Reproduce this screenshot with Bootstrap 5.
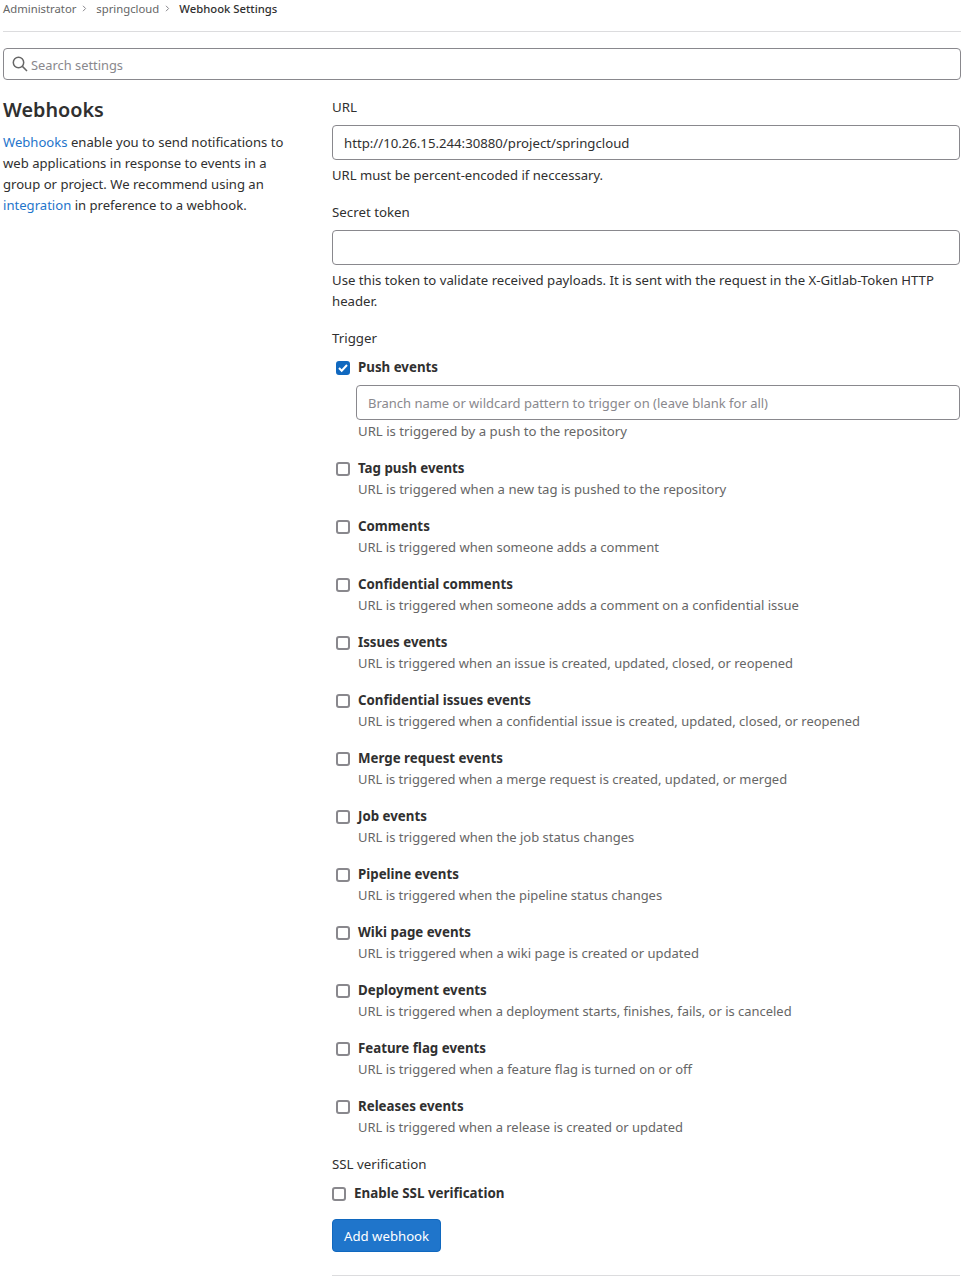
<!DOCTYPE html>
<html lang="en"><head><meta charset="utf-8"><title>Webhook Settings</title>
<link href="https://cdn.jsdelivr.net/npm/bootstrap@5.3.0/dist/css/bootstrap.min.css" rel="stylesheet">
<style>
html,body{background:#fff}
body{font-family:"Noto Sans","Open Sans",sans-serif;font-size:13.1px;line-height:21px;color:#303030;overflow:hidden}
.shell{width:958px;margin-left:3px}
.crumbs{height:35px;border-bottom:1px solid #dcdcde;margin-top:-3px;font-size:11.3px;line-height:24px;color:#666}
.crumbs b{font-weight:500;color:#303030}
.crumbs svg{margin:0 6px 2px 6px}
.searchbox{height:32px;margin-top:16px;border:1px solid #89888d;border-radius:4px;padding:0 8px;color:#89888d;gap:3px;font-size:12.85px}
.searchbox span{padding-top:2px}
.sidecol{width:329px;flex:none;padding-top:18px}
.sidecol h4{font-size:19.8px;line-height:24px;font-weight:600;margin:0 0 10px;color:#303030}
.sidecol p{width:290px;margin:0}
.sidecol a{color:#1f75cb;text-decoration:none}
.maincol{width:628px;flex:none;padding-top:17px}
.fieldname{font-weight:400;font-size:13.3px;margin:0;line-height:21px;display:block}
.fieldgap{margin-top:7px}
.textbox{display:block;width:100%;height:35px;border:1px solid #89888d;border-radius:4px;padding:0 11px;font:inherit;color:#303030;background:#fff;outline:0}
.urlbox{font-size:13.2px}
.textbox::placeholder{color:#89888d;opacity:1}
.hint{margin-top:5px}
.hintlong{font-size:13.18px}
.evt{margin-top:16px;padding-left:26px;position:relative}
.evt.first{margin-top:8px}
.evt .boxmark,.sslrow .boxmark{position:absolute;left:4px;top:4px}
.boxmark{display:block;width:14px;height:14px;border:2px solid #89888d;border-radius:3px;background:#fff}
.boxmark.on{background:#1068bf;border-color:#1068bf}
.evtname{font-weight:700;font-size:13.3px;color:#303030;display:block}
.evthint{color:#666;display:block;font-size:12.95px}
.evthint.fit-a{font-size:13.2px}
.evthint.fit-b{font-size:13.13px}
.evthint.fit-c{font-size:13.03px}
.pushbox{width:calc(100% + 2px);margin:7px 0 1px -2px;font-size:12.98px}
.sslrow{position:relative;padding-left:22px;margin-top:8px;font-weight:700;font-size:13.4px}
.sslrow .boxmark{left:0}
.addbtn{background:#1f75cb;border:1px solid #1068bf;color:#fff;font-size:13.2px;line-height:21px;padding:6px 11px 4px;border-radius:4px;margin-top:15px;display:block}
.endrule{border-top:1px solid #dcdcde;margin-top:23px}
</style></head><body>
<div class="shell">
<div class="crumbs">Administrator<svg width="5" height="7" viewBox="0 0 5 7"><path d="M1 .8l2.6 2.7L1 6.2" fill="none" stroke="#89888d"/></svg> springcloud<svg width="5" height="7" viewBox="0 0 5 7"><path d="M1 .8l2.6 2.7L1 6.2" fill="none" stroke="#89888d"/></svg> <b>Webhook Settings</b></div>
<div class="searchbox d-flex align-items-center"><svg width="16" height="16" viewBox="0 0 16 16" fill="none" stroke="#666" stroke-width="1.5"><circle cx="6.5" cy="6.5" r="5.2"/><path d="M10.4 10.4L15 15"/></svg><span>Search settings</span></div>
<div class="d-flex">
<div class="sidecol"><h4>Webhooks</h4><p><a href="#">Webhooks</a> enable you to send notifications to web applications in response to events in a group or project. We recommend using an <a href="#">integration</a> in preference to a webhook.</p></div>
<div class="maincol">
<label class="fieldname">URL</label>
<input class="textbox urlbox fieldgap" value="http://10.26.15.244:30880/project/springcloud">
<div class="hint">URL must be percent-encoded if neccessary.</div>
<label class="fieldname mt-3">Secret token</label>
<input class="textbox fieldgap">
<div class="hint hintlong">Use this token to validate received payloads. It is sent with the request in the X-Gitlab-Token HTTP header.</div>
<label class="fieldname mt-3">Trigger</label>
<div class="evt first"><span class="boxmark on"><svg width="10" height="10" viewBox="0 0 10 10" class="d-block"><path d="M1 5l2.7 2.7L9 2" fill="none" stroke="#fff" stroke-width="2"/></svg></span><span class="evtname">Push events</span>
<input class="textbox pushbox" placeholder="Branch name or wildcard pattern to trigger on (leave blank for all)"><span class="evthint fit-a">URL is triggered by a push to the repository</span></div>
<div class="evt"><span class="boxmark"></span><span class="evtname">Tag push events</span><span class="evthint fit-b">URL is triggered when a new tag is pushed to the repository</span></div>
<div class="evt"><span class="boxmark"></span><span class="evtname">Comments</span><span class="evthint fit-c">URL is triggered when someone adds a comment</span></div>
<div class="evt"><span class="boxmark"></span><span class="evtname">Confidential comments</span><span class="evthint fit-c">URL is triggered when someone adds a comment on a confidential issue</span></div>
<div class="evt"><span class="boxmark"></span><span class="evtname">Issues events</span><span class="evthint">URL is triggered when an issue is created, updated, closed, or reopened</span></div>
<div class="evt"><span class="boxmark"></span><span class="evtname">Confidential issues events</span><span class="evthint">URL is triggered when a confidential issue is created, updated, closed, or reopened</span></div>
<div class="evt"><span class="boxmark"></span><span class="evtname">Merge request events</span><span class="evthint">URL is triggered when a merge request is created, updated, or merged</span></div>
<div class="evt"><span class="boxmark"></span><span class="evtname">Job events</span><span class="evthint fit-c">URL is triggered when the job status changes</span></div>
<div class="evt"><span class="boxmark"></span><span class="evtname">Pipeline events</span><span class="evthint">URL is triggered when the pipeline status changes</span></div>
<div class="evt"><span class="boxmark"></span><span class="evtname">Wiki page events</span><span class="evthint fit-c">URL is triggered when a wiki page is created or updated</span></div>
<div class="evt"><span class="boxmark"></span><span class="evtname">Deployment events</span><span class="evthint">URL is triggered when a deployment starts, finishes, fails, or is canceled</span></div>
<div class="evt"><span class="boxmark"></span><span class="evtname">Feature flag events</span><span class="evthint fit-c">URL is triggered when a feature flag is turned on or off</span></div>
<div class="evt"><span class="boxmark"></span><span class="evtname">Releases events</span><span class="evthint">URL is triggered when a release is created or updated</span></div>
<label class="fieldname mt-3">SSL verification</label>
<div class="sslrow"><span class="boxmark"></span>Enable SSL verification</div>
<button class="addbtn" type="button">Add webhook</button>
<div class="endrule"></div>
</div></div></div>
<script src="https://cdn.jsdelivr.net/npm/bootstrap@5.3.0/dist/js/bootstrap.bundle.min.js"></script>
</body></html>
